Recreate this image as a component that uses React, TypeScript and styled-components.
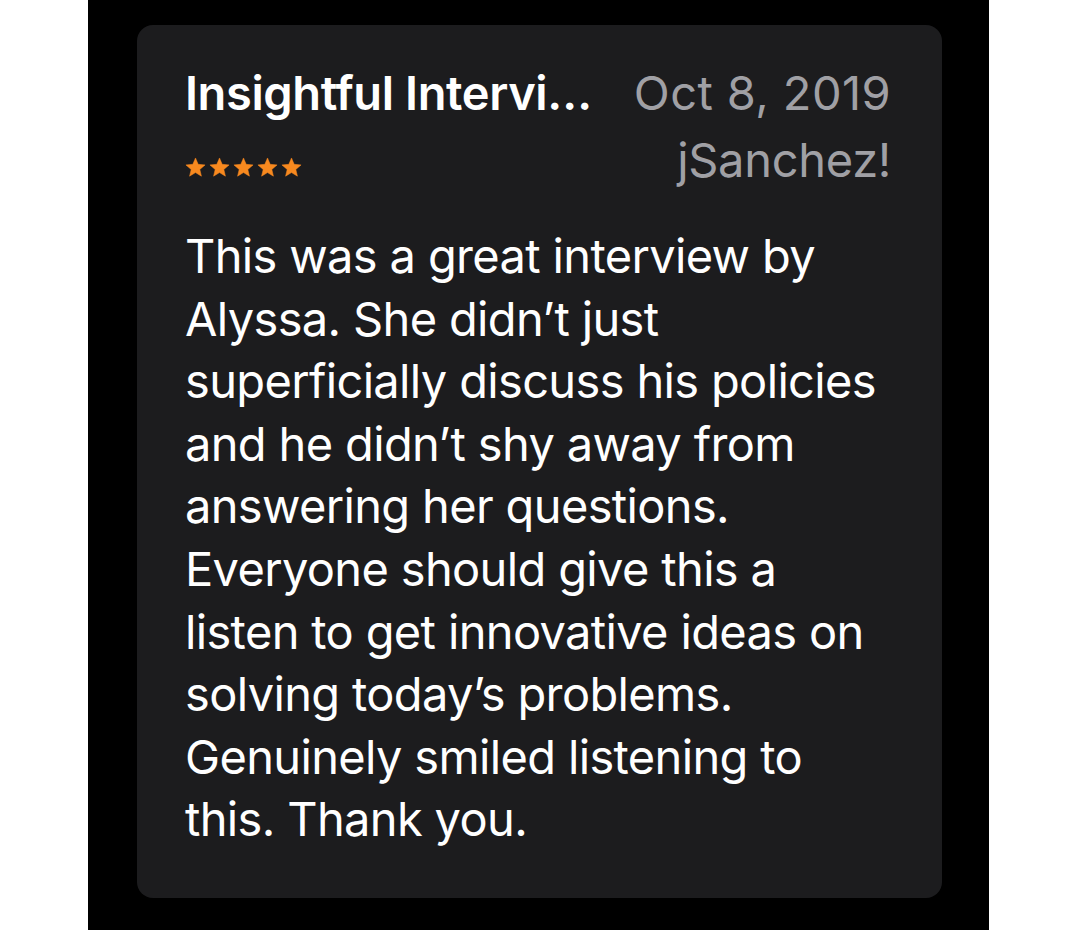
import React from "react";
import styled, { createGlobalStyle } from "styled-components";

const GlobalStyle = createGlobalStyle`
    html, body {
        margin: 0;
        padding: 0;
        background: #ffffff;
    }
    #root {
        width: 1080px;
        height: 930px;
    }
`;

const Page = styled.div`
    width: 1080px;
    height: 930px;
    display: flex;
    justify-content: flex-start;
    background: #ffffff;
`;

const Frame = styled.div`
    width: 901px;
    height: 930px;
    margin-left: 88px;
    padding: 25px 0 0 49px;
    box-sizing: border-box;
    background: #000000;
`;

const Card = styled.div`
    width: 805px;
    height: 873px;
    box-sizing: border-box;
    padding: 40px 51px 0 48px;
    border-radius: 16px;
    background: #1c1c1e;
    font-family: Inter, "Noto Sans", sans-serif;
    font-size: 47px;
    color: #ffffff;
`;

const HeadRow = styled.div`
    display: flex;
    justify-content: space-between;
    align-items: flex-start;
    gap: 24px;
    line-height: 56px;
`;

const SubRow = styled(HeadRow)`
    margin-top: 11px;
`;

const Title = styled.div`
    font-weight: 600;
    white-space: nowrap;
    letter-spacing: -0.4px;
`;

const Meta = styled.div<{ $tight?: boolean }>`
    color: #a0a0a5;
    white-space: nowrap;
    letter-spacing: ${(p) => (p.$tight ? "-0.3px" : "0.4px")};
`;

const Stars = styled.div`
    display: flex;
    gap: 3px;
    margin-top: 25px;
    margin-left: 0px;
`;

const Body = styled.p`
    margin: 37px 0 0;
    line-height: 62.6px;
    letter-spacing: -0.65px;
    white-space: nowrap;
`;

function Star() {
    return (
        <svg width="21" height="21" viewBox="0 0 24 24">
            <path
                d="M12 1.1L15.06 8.39 22.94 9.05 16.95 14.21 18.76 21.9 12 17.8 5.24 21.9 7.05 14.21 1.06 9.05 8.94 8.39Z"
                fill="#f7891f"
                stroke="#f7891f"
                strokeWidth="0.6"
                strokeLinejoin="round"
            />
        </svg>
    );
}

const lines = [
    "This was a great interview by",
    "Alyssa. She didn\u2019t just",
    "superficially discuss his policies",
    "and he didn\u2019t shy away from",
    "answering her questions.",
    "Everyone should give this a",
    "listen to get innovative ideas on",
    "solving today\u2019s problems.",
    "Genuinely smiled listening to",
    "this. Thank you.",
];

export default function App() {
    return (
        <>
            <GlobalStyle />
            <Page>
                <Frame>
                    <Card>
                        <HeadRow>
                            <Title>Insightful Intervi…</Title>
                            <Meta>Oct 8, 2019</Meta>
                        </HeadRow>
                        <SubRow>
                            <Stars>
                                {[0, 1, 2, 3, 4].map((i) => (
                                    <Star key={i} />
                                ))}
                            </Stars>
                            <Meta $tight>jSanchez!</Meta>
                        </SubRow>
                        <Body>
                            {lines.map((line, i) => (
                                <React.Fragment key={i}>
                                    {line}
                                    {i < lines.length - 1 && <br />}
                                </React.Fragment>
                            ))}
                        </Body>
                    </Card>
                </Frame>
            </Page>
        </>
    );
}
